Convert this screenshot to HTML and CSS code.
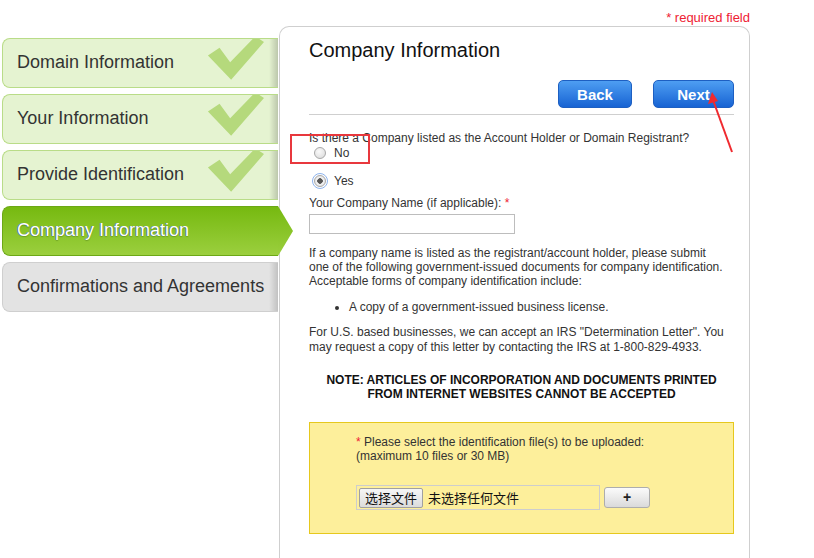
FILE: index.html
```html
<!DOCTYPE html>
<html lang="en">
<head>
    <meta charset="UTF-8">
    <title>Company Information</title>
    <link rel="stylesheet" href="styles.css">
</head>
<body>
    <div class="page">
        <ul class="steps">
            <li class="step done">Domain Information
                <svg class="check" viewBox="0 0 60 46"><path d="M2 20 L14 12 L25 27 L51 0 L60 6 L26 45 Z"/></svg>
            </li>
            <li class="step done">Your Information
                <svg class="check" viewBox="0 0 60 46"><path d="M2 20 L14 12 L25 27 L51 0 L60 6 L26 45 Z"/></svg>
            </li>
            <li class="step done">Provide Identification
                <svg class="check" viewBox="0 0 60 46"><path d="M2 20 L14 12 L25 27 L51 0 L60 6 L26 45 Z"/></svg>
            </li>
            <li class="step current">Company Information</li>
            <li class="step todo">Confirmations and Agreements</li>
        </ul>

        <div class="main">
            <div class="required"><span class="star">*</span> required field</div>
            <div class="panel">
                <h2>Company Information</h2>
                <div class="actions">
                    <button type="button" class="btn btn-back">Back</button>
                    <button type="button" class="btn btn-next">Next</button>
                </div>
                <div class="divider"></div>

                <p class="question">Is there a Company listed as the Account Holder or Domain Registrant?</p>
                <div class="radio-row no-row"><span class="radio"></span>No</div>
                <div class="radio-row yes-row"><span class="radio checked"></span>Yes</div>

                <label class="field-label">Your Company Name (if applicable): <span class="star">*</span></label>
                <div class="text-input"></div>

                <p class="info">If a company name is listed as the registrant/account holder, please submit one of the following government-issued documents for company identification. Acceptable forms of company identification include:</p>
                <ul class="docs">
                    <li>A copy of a government-issued business license.</li>
                </ul>
                <p class="info irs">For U.S. based businesses, we can accept an IRS "Determination Letter". You may request a copy of this letter by contacting the IRS at 1-800-829-4933.</p>

                <p class="note">NOTE: ARTICLES OF INCORPORATION AND DOCUMENTS PRINTED FROM INTERNET WEBSITES CANNOT BE ACCEPTED</p>

                <div class="upload">
                    <p class="upload-text"><span class="star">*</span> Please select the identification file(s) to be uploaded:<br>(maximum 10 files or 30 MB)</p>
                    <div class="upload-row">
                        <div class="file-box">
                            <span class="file-btn">选择文件</span>
                            <span class="file-name">未选择任何文件</span>
                        </div>
                        <span class="plus-btn">+</span>
                    </div>
                </div>
            </div>
        </div>

        <!-- annotation overlays -->
        <div class="mark-box"></div>
        <svg class="mark-arrow" width="40" height="70" viewBox="0 0 40 70">
            <line x1="32" y1="62" x2="13" y2="10" stroke="#f02a2f" stroke-width="2"/>
            <polygon points="12,2 8,14 18,11" fill="#f02a2f"/>
        </svg>
    </div>
</body>
</html>
```

FILE: styles.css
```css
body {
    margin: 0;
    font-family: "Liberation Sans", Arial, sans-serif;
    font-size: 12px;
    color: #333;
    background-color: #fff;
}

.page {
    position: relative;
    display: flex;
    padding-left: 2px;
    height: 558px;
    overflow: hidden;
}

/* Step tabs */
.steps {
    position: relative;
    z-index: 1;
    list-style: none;
    margin: 38px 0 0;
    padding: 0;
    width: 276px;
}

.step {
    position: relative;
    box-sizing: border-box;
    height: 50px;
    margin-bottom: 6px;
    padding-left: 14px;
    line-height: 46px;
    font-size: 18px;
    border: 1px solid #b9dc88;
    border-right: none;
    border-radius: 8px 0 0 8px;
    overflow: hidden;
}

.step.done {
    color: #333;
    background: linear-gradient(to left, rgba(0, 0, 0, 0.18), rgba(0, 0, 0, 0) 9px), #e5f3d1;
}

.check {
    position: absolute;
    left: 203px;
    top: -3px;
    width: 58px;
    height: 45px;
    fill: #b5d97c;
}

.step.current {
    overflow: visible;
    color: #fff;
    border-color: #6ca816;
    background: linear-gradient(#76b910, #9bcf3e);
    text-shadow: -1px 0 0 rgba(40, 60, 210, 0.55), 0 1px 1px rgba(0, 40, 0, 0.25);
}

.step.current::after {
    content: "";
    position: absolute;
    top: -1px;
    right: -15px;
    width: 15px;
    height: 50px;
    background: linear-gradient(#76b910, #9bcf3e);
    clip-path: polygon(0 0, 100% 50%, 0 100%);
}

.step.todo {
    color: #333;
    border-color: #cfcfcf;
    background: linear-gradient(to left, rgba(0, 0, 0, 0.15), rgba(0, 0, 0, 0) 9px), #e3e3e3;
}

/* Main panel */
.main {
    width: 471px;
    margin-left: 1px;
}

.required {
    box-sizing: border-box;
    height: 26px;
    padding-top: 11px;
    line-height: 14px;
    font-size: 13px;
    text-align: right;
    color: #ee2233;
}

.star {
    color: #ee2233;
}

.panel {
    box-sizing: border-box;
    height: 540px;
    padding: 0 15px 0 29px;
    border: 1px solid #cfcfcf;
    border-bottom: none;
    border-radius: 10px 10px 0 0;
}

.panel h2 {
    margin: 0;
    padding-top: 11px;
    font-size: 20px;
    line-height: 24px;
    font-weight: normal;
    color: #111;
}

.actions {
    display: flex;
    justify-content: flex-end;
    gap: 21px;
    margin-top: 18px;
}

.btn {
    height: 28px;
    border: 1px solid #1d5fc2;
    border-radius: 5px;
    background: linear-gradient(#4e9ef2, #1763d3);
    color: #fff;
    font-family: "Liberation Sans", Arial, sans-serif;
    font-size: 15px;
    font-weight: bold;
    cursor: pointer;
}

.btn-back {
    width: 74px;
}

.btn-next {
    width: 81px;
}

.divider {
    margin-top: 6px;
    border-top: 1px solid #cfcfcf;
}

.question {
    margin: 16px 0 0;
    line-height: 14px;
}

.radio-row {
    display: flex;
    align-items: center;
    height: 14px;
    line-height: 14px;
}

.no-row {
    margin-top: 1px;
}

.yes-row {
    margin-top: 14px;
}

.radio {
    box-sizing: border-box;
    width: 12px;
    height: 12px;
    margin: 0 8px 0 5px;
    border: 1px solid #a8a8a8;
    border-radius: 50%;
    background: radial-gradient(circle at 40% 35%, #fafafa, #d8d8d8);
}

.radio.checked {
    background: radial-gradient(circle, #555 0 2.5px, #f4f4f4 3px, #d8d8d8);
    outline: 1px solid #8db3ec;
    outline-offset: 1px;
}

.field-label {
    display: block;
    margin-top: 8px;
    line-height: 14px;
}

.text-input {
    box-sizing: border-box;
    width: 206px;
    height: 20px;
    margin-top: 4px;
    border: 1px solid #bdbdbd;
}

.info {
    margin: 12px 0 0;
    padding-right: 8px;
    line-height: 14px;
}

.info.irs {
    margin-top: 11px;
    line-height: 14.5px;
}

.docs {
    margin: 12px 0 0;
    padding-left: 40px;
    line-height: 14px;
}

.note {
    margin: 19px 0 0;
    line-height: 14px;
    font-weight: bold;
    text-align: center;
    color: #111;
}

/* Upload box */
.upload {
    box-sizing: border-box;
    height: 112px;
    margin-top: 21px;
    padding: 12px 0 0 46px;
    border: 1px solid #e6c81d;
    background-color: #fdef9b;
}

.upload-text {
    margin: 0;
    line-height: 14px;
}

.upload-row {
    display: flex;
    align-items: center;
    margin-top: 22px;
}

.file-box {
    box-sizing: border-box;
    display: flex;
    align-items: center;
    width: 244px;
    height: 25px;
    padding-left: 2px;
    border: 1px solid #cdcdcd;
    font-family: "Noto Sans CJK SC", sans-serif;
    font-size: 13px;
    color: #111;
}

.file-btn {
    box-sizing: border-box;
    width: 64px;
    height: 20px;
    line-height: 18px;
    text-align: center;
    border: 1px solid #a0a0a0;
    border-radius: 2px;
    background: linear-gradient(#f6f6f6, #dcdcdc);
}

.file-name {
    margin-left: 5px;
}

.plus-btn {
    box-sizing: border-box;
    width: 46px;
    height: 21px;
    margin-left: 4px;
    line-height: 19px;
    text-align: center;
    font-size: 14px;
    font-weight: bold;
    color: #222;
    border: 1px solid #adadad;
    border-radius: 3px;
    background: linear-gradient(#fbfbfb, #dadada);
}

/* Annotations */
.mark-box {
    position: absolute;
    left: 290px;
    top: 134px;
    width: 76px;
    height: 26px;
    border: 2px solid #e8383d;
}

.mark-arrow {
    position: absolute;
    left: 700px;
    top: 90px;
}
```
